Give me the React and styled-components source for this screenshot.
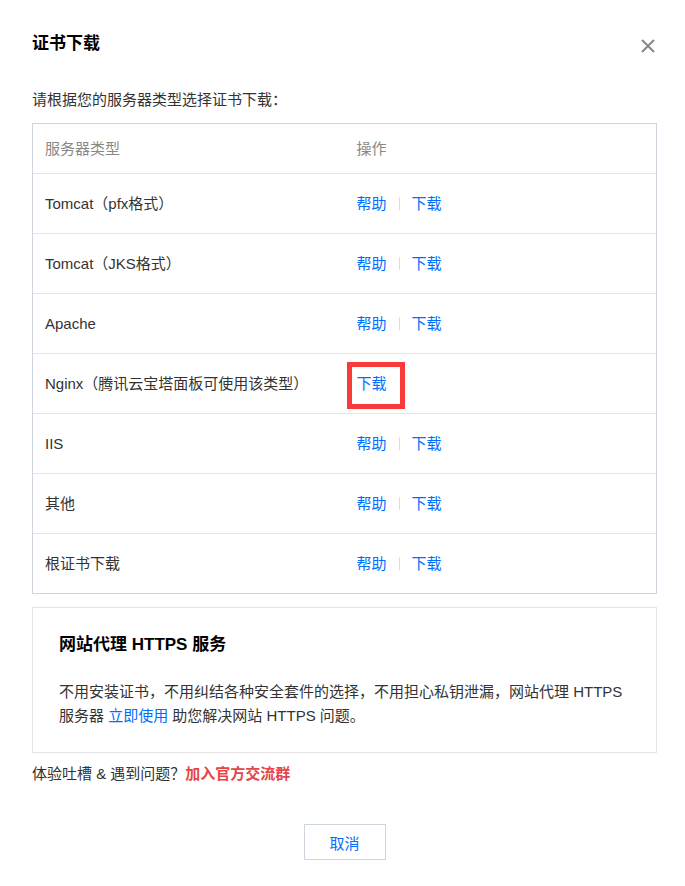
import React from "react";
import styled, { createGlobalStyle } from "styled-components";

const GlobalStyle = createGlobalStyle`
  html, body {
    margin: 0;
    padding: 0;
    background: #fff;
  }
  body {
    font-family: "Liberation Sans", "Noto Sans CJK SC", sans-serif;
    color: #333;
  }
  * { box-sizing: border-box; }
`;

const Dialog = styled.div`
  width: 685px;
  min-height: 886px;
  padding: 32px 28px 26px 32px;
  display: flex;
  flex-direction: column;
  font-size: 15px;
  line-height: 24px;
`;

const Header = styled.div`
  display: flex;
  justify-content: space-between;
  align-items: center;
  height: 24px;
`;

const Title = styled.h2`
  margin: 0;
  font-size: 17px;
  font-weight: 700;
  line-height: 24px;
  color: #000;
`;

const CloseButton = styled.button`
  border: none;
  background: none;
  padding: 0;
  margin: 4px 1px 0 0;
  width: 16px;
  height: 16px;
  display: flex;
  cursor: pointer;
  color: #888;
`;

const Intro = styled.p`
  margin: 32px 0 11px;
  color: #333;
`;

const Table = styled.div`
  border: 1px solid #cfd5de;
  display: flex;
  flex-direction: column;
`;

const Row = styled.div`
  display: grid;
  grid-template-columns: 1fr 1fr;
  align-items: center;
  height: ${(p) => (p.$head ? 50 : 60)}px;
  border-bottom: 1px solid #e5e5e5;
  &:last-child {
    border-bottom: none;
    height: 59px;
  }
`;

const Cell = styled.div`
  padding-left: 12px;
  color: ${(p) => (p.$head ? "#888" : "#333")};
  display: flex;
  align-items: center;
`;

const Link = styled.a`
  color: #006eff;
  text-decoration: none;
  cursor: pointer;
  position: relative;
`;

const Marked = styled(Link)`
  &::after {
    content: "";
    position: absolute;
    top: -10px;
    bottom: -13px;
    left: -10px;
    right: -18px;
    border: 5px solid #fa3a3a;
    pointer-events: none;
  }
`;

const Sep = styled.span`
  display: inline-block;
  width: 1px;
  height: 13px;
  background: #ddd;
  margin: 0 12px;
`;

const Promo = styled.div`
  margin-top: 13px;
  border: 1px solid #e5e5e5;
  padding: 25px 26px 24px;
`;

const PromoTitle = styled.h3`
  margin: 0;
  font-size: 17px;
  font-weight: 700;
  line-height: 24px;
  color: #000;
`;

const PromoText = styled.p`
  margin: 23px 0 0;
  color: #333;
`;

const Feedback = styled.p`
  margin: 9px 0 0;
  color: #333;
`;

const Strong = styled.a`
  color: #e54545;
  font-weight: 700;
  text-decoration: none;
`;

const Footer = styled.div`
  display: flex;
  justify-content: center;
  margin-top: 38px;
`;

const Button = styled.button`
  width: 82px;
  height: 36px;
  border: 1px solid #cfd5de;
  background: #fff;
  color: #006eff;
  font-family: inherit;
  font-size: 15px;
  cursor: pointer;
`;

const rows = [
  { name: "Tomcat（pfx格式）", help: true },
  { name: "Tomcat（JKS格式）", help: true },
  { name: "Apache", help: true },
  { name: "Nginx（腾讯云宝塔面板可使用该类型）", help: false },
  { name: "IIS", help: true },
  { name: "其他", help: true },
  { name: "根证书下载", help: true },
];

export default function App() {
  return (
    <>
      <GlobalStyle />
      <Dialog>
        <Header>
          <Title>证书下载</Title>
          <CloseButton aria-label="关闭">
            <svg width="16" height="16" viewBox="0 0 16 16">
              <path d="M2 2 L14 14 M14 2 L2 14" stroke="currentColor" strokeWidth="2" fill="none" />
            </svg>
          </CloseButton>
        </Header>
        <Intro>请根据您的服务器类型选择证书下载：</Intro>
        <Table>
          <Row $head>
            <Cell $head>服务器类型</Cell>
            <Cell $head>操作</Cell>
          </Row>
          {rows.map((r) => (
            <Row key={r.name}>
              <Cell>{r.name}</Cell>
              <Cell>
                {r.help ? (
                  <>
                    <Link>帮助</Link>
                    <Sep />
                    <Link>下载</Link>
                  </>
                ) : (
                  <Marked>下载</Marked>
                )}
              </Cell>
            </Row>
          ))}
        </Table>
        <Promo>
          <PromoTitle>网站代理 HTTPS 服务</PromoTitle>
          <PromoText>
            不用安装证书，不用纠结各种安全套件的选择，不用担心私钥泄漏，网站代理 HTTPS 服务器 <Link>立即使用</Link> 助您解决网站 HTTPS 问题。
          </PromoText>
        </Promo>
        <Feedback>
          体验吐槽 &amp; 遇到问题？<Strong>加入官方交流群</Strong>
        </Feedback>
        <Footer>
          <Button>取消</Button>
        </Footer>
      </Dialog>
    </>
  );
}
